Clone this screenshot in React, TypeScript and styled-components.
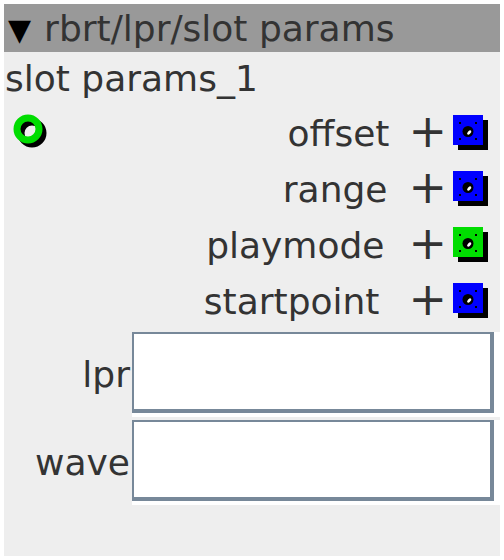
import React from "react";
import styled, { createGlobalStyle } from "styled-components";

const GlobalStyle = createGlobalStyle`
  html, body {
    margin: 0;
    padding: 0;
    background: #ffffff;
  }
  body {
    padding: 4px;
    font-family: "DejaVu Sans", "Liberation Sans", sans-serif;
  }
`;

const Panel = styled.div`
  width: 496px;
  height: 552px;
  background: #eeeeee;
  color: #333333;
  display: flex;
  flex-direction: column;
`;

const Header = styled.div`
  height: 48px;
  background: #999999;
  display: flex;
  align-items: center;
  padding-left: 4px;
  font-size: 36px;
  white-space: nowrap;
`;

const Caret = styled.span`
  color: #000000;
  font-size: 30px;
  margin-right: 13px;
  margin-top: 2px;
`;

const NodeName = styled.div`
  height: 52px;
  display: flex;
  align-items: center;
  padding-left: 1px;
  font-size: 36px;
`;

const Ports = styled.div`
  display: flex;
  flex-direction: column;
  margin-top: 1px;
`;

const PortRow = styled.div`
  height: 56px;
  display: flex;
  align-items: center;
  justify-content: flex-end;
  padding-right: 11px;
`;

const Outlet = styled.svg`
  margin-right: auto;
  margin-left: 9px;
`;

const PortLabel = styled.span<{ $gap: number }>`
  font-size: 36px;
  margin-right: ${(p) => p.$gap}px;
`;

const Plus = styled.span`
  font-size: 46px;
  line-height: 1;
  margin-right: 6px;
  margin-top: -4px;
`;

const Fields = styled.div`
  display: grid;
  grid-template-columns: 128px 1fr;
  row-gap: 3px;
  margin-top: 3px;
`;

const FieldLabel = styled.label`
  font-size: 36px;
  text-align: right;
  align-self: center;
  padding-right: 2px;
`;

const FieldFrame = styled.div`
  border-style: solid;
  border-width: 0 6px 4px 0;
  border-color: transparent #ffffff #ffffff transparent;
`;

const FieldBox = styled.div`
  height: 75px;
  background: #ffffff;
  border-style: solid;
  border-color: #778899;
  border-width: 2px 4px 4px 2px;
`;

const Jack = ({ color }: { color: string }) => (
  <svg width="36" height="36" viewBox="0 0 36 36">
    <rect x="5" y="5" width="30" height="30" fill="#000" />
    <rect x="0" y="0" width="30" height="30" fill={color} />
    {[
      [7, 8],
      [23, 8],
      [7, 24],
      [23, 24],
    ].map(([x, y]) => (
      <rect key={`${x}-${y}`} x={x - 1} y={y - 1} width="2" height="2" fill="#000" />
    ))}
    <circle cx="15" cy="16.5" r="5.5" fill="#000" />
    <ellipse cx="16.2" cy="17.5" rx="2.6" ry="1.4" fill="#fff" transform="rotate(-45 16.2 17.5)" />
  </svg>
);

const ports = [
  { name: "offset", color: "#0000ff", gap: 19 },
  { name: "range", color: "#0000ff", gap: 21 },
  { name: "playmode", color: "#00dd00", gap: 24 },
  { name: "startpoint", color: "#0000ff", gap: 29 },
];

export default function App() {
  return (
    <>
      <GlobalStyle />
      <Panel>
        <Header>
          <Caret>▼</Caret>
          rbrt/lpr/slot params
        </Header>
        <NodeName>slot params_1</NodeName>
        <Ports>
          {ports.map((p, i) => (
            <PortRow key={p.name}>
              {i === 0 && (
                <Outlet width="38" height="38" viewBox="0 0 38 38">
                  <circle cx="19" cy="19" r="11" fill="none" stroke="#000" strokeWidth="7" />
                  <circle cx="15" cy="15" r="11" fill="none" stroke="#00dd00" strokeWidth="7" />
                </Outlet>
              )}
              <PortLabel $gap={p.gap}>{p.name}</PortLabel>
              <Plus>+</Plus>
              <Jack color={p.color} />
            </PortRow>
          ))}
        </Ports>
        <Fields>
          <FieldLabel>lpr</FieldLabel>
          <FieldFrame>
            <FieldBox />
          </FieldFrame>
          <FieldLabel>wave</FieldLabel>
          <FieldFrame>
            <FieldBox />
          </FieldFrame>
        </Fields>
      </Panel>
    </>
  );
}
